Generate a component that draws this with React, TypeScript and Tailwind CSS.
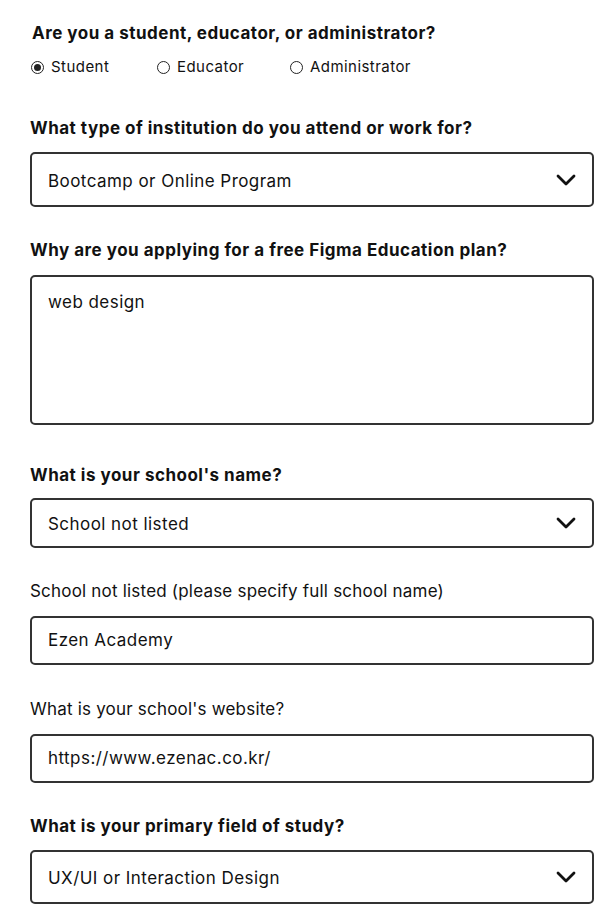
import React from 'react';

const font = { fontFamily: 'Inter, "Liberation Sans", Arial, sans-serif' };

const Chevron = () => (
  <svg width="20" height="12" viewBox="0 0 20 12" fill="none" className="shrink-0">
    <path d="M2 2l8 8 8-8" stroke="#111" strokeWidth="2.8" strokeLinecap="round" strokeLinejoin="round" />
  </svg>
);

const Radio = ({ label, checked }: { label: string; checked?: boolean }) => (
  <label className="flex items-center gap-[7px]">
    <span className="w-[13px] h-[13px] rounded-full border border-[#222] flex items-center justify-center">
      {checked && <span className="w-[7px] h-[7px] rounded-full bg-[#222]" />}
    </span>
    <span className="text-[15px] text-[#111] tracking-[0.45px]">{label}</span>
  </label>
);

const Select = ({ value, h }: { value: string; h: string }) => (
  <div className={`${h} border-2 border-[#333] rounded-[5px] flex items-center justify-between pl-[16px] pr-[16px]`}>
    <span className="text-[17px] text-[#111] tracking-[0.45px] pt-[4px]">{value}</span>
    <Chevron />
  </div>
);

const Input = ({ value }: { value: string }) => (
  <div className="h-[49px] border-2 border-[#333] rounded-[5px] flex items-center pl-[16px]">
    <span className="text-[17px] text-[#111] tracking-[0.45px]">{value}</span>
  </div>
);

const Heading = ({ children, className = '' }: { children: React.ReactNode; className?: string }) => (
  <h2 className={`text-[17px] leading-[24px] font-bold text-[#111] tracking-[0.5px] ${className}`}>{children}</h2>
);

const Label = ({ children, className = '' }: { children: React.ReactNode; className?: string }) => (
  <p className={`text-[17px] leading-[24px] text-[#111] tracking-[0.2px] ${className}`}>{children}</p>
);

export default function App() {
  return (
    <div className="bg-white min-h-[917px] pl-[30px] pr-[15px] pt-[21px]" style={font}>
      <Heading className="pl-[2px]">Are you a student, educator, or administrator?</Heading>
      <div className="flex items-center mt-[10px] h-[24px] pl-[1px]">
        <div className="w-[126px]"><Radio label="Student" checked /></div>
        <div className="w-[133px]"><Radio label="Educator" /></div>
        <Radio label="Administrator" />
      </div>

      <Heading className="mt-[37px]">What type of institution do you attend or work for?</Heading>
      <div className="mt-[12px]">
        <Select value="Bootcamp or Online Program" h="h-[55px]" />
      </div>

      <Heading className="mt-[31px]">Why are you applying for a free Figma Education plan?</Heading>
      <div className="mt-[13px] h-[150px] border-2 border-[#333] rounded-[5px] pl-[16px] pt-[13px]">
        <span className="text-[17px] text-[#111] tracking-[0.45px]">web design</span>
      </div>

      <Heading className="mt-[38px]">What is your school's name?</Heading>
      <div className="mt-[11px]">
        <Select value="School not listed" h="h-[50px]" />
      </div>

      <Label className="mt-[31px]">School not listed (please specify full school name)</Label>
      <div className="mt-[13px]">
        <Input value="Ezen Academy" />
      </div>

      <Label className="mt-[32px]">What is your school's website?</Label>
      <div className="mt-[13px]">
        <Input value="https://www.ezenac.co.kr/" />
      </div>

      <Heading className="mt-[31px]">What is your primary field of study?</Heading>
      <div className="mt-[12px]">
        <Select value="UX/UI or Interaction Design" h="h-[54px]" />
      </div>
    </div>
  );
}
